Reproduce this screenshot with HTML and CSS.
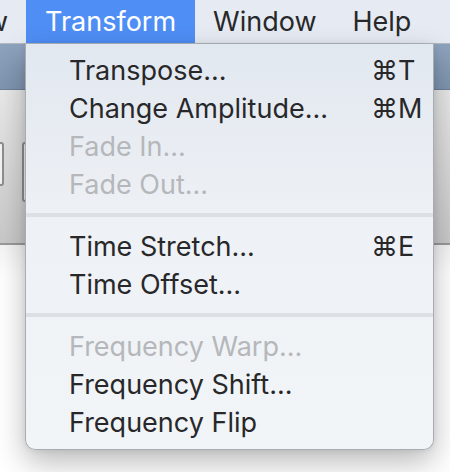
FILE: index.html
```
<!DOCTYPE html>
<html>
<head>
<meta charset="utf-8">
<link rel="stylesheet" href="styles.css">
</head>
<body>
<div class="screen">
  <div class="menubar">
    <span class="mb-item mb-cut"><span class="mb-cut-text">w</span></span>
    <span class="mb-item mb-active">Transform</span>
    <span class="mb-item mb-plain">Window</span>
    <span class="mb-item mb-plain">Help</span>
  </div>
  <div class="workspace">
    <div class="toolbar"></div>
    <div class="panel">
      <div class="box box-left"></div>
      <div class="box box-mid"></div>
    </div>
    <div class="blank"></div>

    <div class="menu">
      <div class="row"><span class="label">Transpose...</span><span class="key">⌘T</span></div>
      <div class="row"><span class="label">Change Amplitude...</span><span class="key">⌘M</span></div>
      <div class="row disabled"><span class="label">Fade In...</span></div>
      <div class="row disabled"><span class="label">Fade Out...</span></div>
      <div class="sep"></div>
      <div class="row"><span class="label">Time Stretch...</span><span class="key">⌘E</span></div>
      <div class="row"><span class="label">Time Offset...</span></div>
      <div class="sep"></div>
      <div class="row disabled"><span class="label">Frequency Warp...</span></div>
      <div class="row"><span class="label">Frequency Shift...</span></div>
      <div class="row"><span class="label">Frequency Flip</span></div>
    </div>
  </div>
</div>
</body>
</html>
```
FILE: styles.css
```
html, body {
  margin: 0;
  padding: 0;
  background: #ffffff;
}
.screen {
  width: 450px;
  height: 472px;
  overflow: hidden;
  position: relative;
  font-family: Inter, "Open Sans", "Liberation Sans", sans-serif;
  color: #28282a;
}
.menubar {
  height: 43px;
  border-bottom: 1px solid #b4b9c1;
  background: #e6ebf3;
  display: flex;
  align-items: stretch;
  font-size: 27px;
}
.mb-item {
  display: flex;
  align-items: center;
  padding: 0 19px;
  color: #28282a;
}
.mb-plain {
  padding: 0 18px;
}
.mb-cut {
  padding: 0 18px 0 0;
  width: 8px;
  overflow: hidden;
  justify-content: flex-end;
}
.mb-cut-text {
  flex: none;
}
.mb-active {
  background: #4f8ef5;
  color: #ffffff;
}
.workspace {
  position: relative;
  height: 428px;
}
.toolbar {
  height: 45px;
  background: linear-gradient(#8ea3bd, #7f95b1);
  border-bottom: 1px solid #6f8099;
}
.panel {
  position: relative;
  height: 153px;
  background: linear-gradient(#e9e9e9, #c9c9c9);
  border-bottom: 2px solid #9a9a9a;
}
.box {
  position: absolute;
  border: 2px solid #8e8e8e;
  border-radius: 3px;
  background: #f3f3f3;
}
.box-left {
  left: -10px;
  top: 52px;
  width: 10px;
  height: 40px;
}
.box-mid {
  left: 22px;
  top: 52px;
  width: 10px;
  height: 56px;
}
.blank {
  background: linear-gradient(#f4f4f4, #ffffff 30px);
  height: 228px;
}
.menu {
  position: absolute;
  left: 25px;
  top: 0;
  width: 409px;
  height: 406px;
  padding-top: 7px;
  box-sizing: border-box;
  background: linear-gradient(#e2e8f0, #eef1f5 45%, #f2f5f8);
  border: 1px solid #a9adb3;
  border-top: none;
  border-radius: 0 0 10px 10px;
  box-shadow: 0 12px 30px rgba(0, 0, 0, 0.28), 0 0 6px rgba(0, 0, 0, 0.08);
  font-size: 27px;
}
.row {
  height: 38px;
  display: flex;
  align-items: center;
  padding-left: 43px;
}
.label {
  flex: 1;
}
.key {
  width: 62px;
}
.disabled {
  color: #b5b7ba;
}
.sep {
  height: 4px;
  margin: 10px 0;
  background: #dcdfe3;
}
```
